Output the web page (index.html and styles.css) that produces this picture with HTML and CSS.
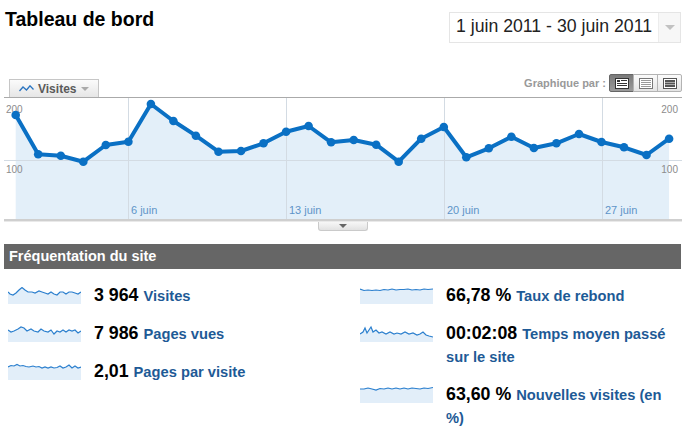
FILE: index.html
```html
<!DOCTYPE html>
<html lang="fr">
<head>
  <meta charset="UTF-8">
  <title>Tableau de bord</title>
  <link rel="stylesheet" href="styles.css">
</head>
<body>

  <div id="header">
    <h1>Tableau de bord</h1>
    <div class="date-range">
      <span class="date-text">1 juin 2011 - 30 juin 2011</span>
      <span class="date-arrow"></span>
    </div>
  </div>

  <div id="toolbar">
    <div class="metric-tab">
      <svg class="tab-icon" width="15" height="7" viewBox="0 0 15 7">
        <polyline points="0.5,6 4,2 7.5,5 11,0.8 14.5,4.5" fill="none" stroke="#2a74c0" stroke-width="1.3"/>
      </svg>
      <span class="tab-label">Visites</span>
      <span class="tab-arrow"></span>
    </div>
    <div class="graph-by">
      <span class="graph-by-label">Graphique par :</span>
      <div class="btn-group">
        <button class="view-btn view-btn-selected">
          <svg width="14" height="11" viewBox="0 0 14 11">
            <rect x="0.5" y="0.5" width="13" height="10" fill="#fff" stroke="#333"/>
            <rect x="2" y="2" width="3" height="2" fill="#333"/>
            <path d="M6 2.5H12M2 5.5H12M2 7.5H12" stroke="#333"/>
          </svg>
        </button>
        <button class="view-btn">
          <svg width="14" height="11" viewBox="0 0 14 11">
            <rect x="0.5" y="0.5" width="13" height="10" fill="#fff" stroke="#777"/>
            <path d="M2 2.5H12M2 4.5H12M2 6.5H12M2 8.5H12" stroke="#999"/>
          </svg>
        </button>
        <button class="view-btn">
          <svg width="14" height="11" viewBox="0 0 14 11">
            <rect x="0.5" y="0.5" width="13" height="10" fill="#fff" stroke="#555"/>
            <rect x="2" y="2" width="10" height="2" fill="#555"/>
            <rect x="2" y="4.5" width="10" height="2" fill="#555"/>
            <rect x="2" y="7" width="10" height="2" fill="#555"/>
          </svg>
        </button>
      </div>
    </div>
  </div>

  <div id="chart">
    <svg width="678" height="125" viewBox="0 0 678 125">
      <defs>
        <marker id="dot" markerUnits="userSpaceOnUse" markerWidth="10" markerHeight="10" refX="5" refY="5">
          <circle cx="5" cy="5" r="4.3" fill="#0a70c4"/>
        </marker>
      </defs>
      <rect x="0" y="0" width="678" height="1" fill="#aaa"/>
      <polygon fill="#e3eff9" points="11.7,18 34.2,57.3 56.8,58.7 79.3,64.7 101.8,48 124.4,44.7 146.9,7 169.4,24 191.9,38.7 214.5,54.7 237,54 259.5,46.3 282.1,34.7 304.6,29 327.1,45.3 349.7,43 372.2,47.7 394.7,64.7 417.2,41.7 439.8,30 462.3,60.3 484.8,51.3 507.4,39.7 529.9,51 552.4,46.3 575,37 597.5,45 620,50.3 642.5,58 665.1,41.7 665.1,122 11.7,122"/>
      <path d="M0 63.5H678M124.5 1V122M282.5 1V122M440.5 1V122M598.5 1V122" stroke="#d3dbe3" fill="none"/>
      <g class="axis-label">
        <text x="2" y="15.6">200</text>
        <text x="2" y="75.6">100</text>
        <text x="674" y="15.6" text-anchor="end">200</text>
        <text x="674" y="75.6" text-anchor="end">100</text>
      </g>
      <g class="date-label">
        <text x="127" y="117">6 juin</text>
        <text x="285" y="117">13 juin</text>
        <text x="443" y="117">20 juin</text>
        <text x="601" y="117">27 juin</text>
      </g>
      <polyline fill="none" stroke="#0a70c4" stroke-width="4" stroke-linejoin="round" marker-start="url(#dot)" marker-mid="url(#dot)" marker-end="url(#dot)" points="11.7,18 34.2,57.3 56.8,58.7 79.3,64.7 101.8,48 124.4,44.7 146.9,7 169.4,24 191.9,38.7 214.5,54.7 237,54 259.5,46.3 282.1,34.7 304.6,29 327.1,45.3 349.7,43 372.2,47.7 394.7,64.7 417.2,41.7 439.8,30 462.3,60.3 484.8,51.3 507.4,39.7 529.9,51 552.4,46.3 575,37 597.5,45 620,50.3 642.5,58 665.1,41.7"/>
      <rect x="0" y="122" width="678" height="2" fill="#cfcfcf"/>
      <rect x="0" y="124" width="678" height="1" fill="#e9e9e9"/>
    </svg>
  </div>
  <div class="chart-handle"></div>

  <div class="section-title">Fréquentation du site</div>

  <div id="metrics">
    <div class="metric-col">
      <div class="metric">
        <svg class="spark" viewBox="0 0 73 17" preserveAspectRatio="none">
          <polygon class="spark-area" points="0,5 2,7 5,8 8,6 11,3 14,0.5 17,3 20,5 24,5 27,6 31,4 34,5 37,6 40,7 43,5 46,7 49,8 52,5 55,5 58,7 61,5 64,5 67,6 70,7 73,5 73,17 0,17"/>
          <polyline class="spark-line" points="0,5 2,7 5,8 8,6 11,3 14,0.5 17,3 20,5 24,5 27,6 31,4 34,5 37,6 40,7 43,5 46,7 49,8 52,5 55,5 58,7 61,5 64,5 67,6 70,7 73,5"/>
        </svg>
        <p><span class="value">3 964</span> <a class="label" href="#">Visites</a></p>
      </div>
      <div class="metric">
        <svg class="spark" viewBox="0 0 73 17" preserveAspectRatio="none">
          <polygon class="spark-area" points="0,5 3,7 6,6 10,4 13,2 16,3 19,6 23,4 26,6 30,7 33,4 36,6 40,7 43,5 46,9 49,6 52,7 55,5 58,7 61,5 64,6 67,5 70,8 73,6 73,17 0,17"/>
          <polyline class="spark-line" points="0,5 3,7 6,6 10,4 13,2 16,3 19,6 23,4 26,6 30,7 33,4 36,6 40,7 43,5 46,9 49,6 52,7 55,5 58,7 61,5 64,6 67,5 70,8 73,6"/>
        </svg>
        <p><span class="value">7 986</span> <a class="label" href="#">Pages vues</a></p>
      </div>
      <div class="metric">
        <svg class="spark" viewBox="0 0 73 17" preserveAspectRatio="none">
          <polygon class="spark-area" points="0,4 3,2.5 6,3 9,1.5 12,3 15,2.5 18,3.5 21,4 25,3 28,4 31,3.5 34,5 37,4 40,5 43,4 46,5 49,4.5 52,3 55,5 58,4 61,2 64,5 67,3 70,5 73,4 73,17 0,17"/>
          <polyline class="spark-line" points="0,4 3,2.5 6,3 9,1.5 12,3 15,2.5 18,3.5 21,4 25,3 28,4 31,3.5 34,5 37,4 40,5 43,4 46,5 49,4.5 52,3 55,5 58,4 61,2 64,5 67,3 70,5 73,4"/>
        </svg>
        <p><span class="value">2,01</span> <a class="label" href="#">Pages par visite</a></p>
      </div>
    </div>

    <div class="metric-col">
      <div class="metric">
        <svg class="spark" viewBox="0 0 73 17" preserveAspectRatio="none">
          <polygon class="spark-area" points="0,2 4,3.5 8,3 12,3.5 16,3 20,3.5 24,2.5 28,3 32,2 36,3 40,2.5 44,2.5 48,2 52,3 56,2.5 60,3 64,2 68,2.5 73,2 73,17 0,17"/>
          <polyline class="spark-line" points="0,2 4,3.5 8,3 12,3.5 16,3 20,3.5 24,2.5 28,3 32,2 36,3 40,2.5 44,2.5 48,2 52,3 56,2.5 60,3 64,2 68,2.5 73,2"/>
        </svg>
        <p><span class="value">66,78 %</span> <a class="label" href="#">Taux de rebond</a></p>
      </div>
      <div class="metric">
        <svg class="spark" viewBox="0 0 73 17" preserveAspectRatio="none">
          <polygon class="spark-area" points="0,9 3,7 5,3 7,8 9,5 11,2 13,7 16,5 19,8 22,7 26,9 30,7 34,9 37,8 41,9 45,7 49,9 53,8 57,10 60,9 63,7 66,10 69,11 73,12 73,17 0,17"/>
          <polyline class="spark-line" points="0,9 3,7 5,3 7,8 9,5 11,2 13,7 16,5 19,8 22,7 26,9 30,7 34,9 37,8 41,9 45,7 49,9 53,8 57,10 60,9 63,7 66,10 69,11 73,12"/>
        </svg>
        <p><span class="value">00:02:08</span> <a class="label" href="#">Temps moyen passé sur le site</a></p>
      </div>
      <div class="metric">
        <svg class="spark" viewBox="0 0 73 17" preserveAspectRatio="none">
          <polygon class="spark-area" points="0,3 4,3 8,2 12,3 16,4 20,2.5 24,3 28,2 32,3 36,2 40,3 44,2 48,3 52,2 56,2.5 60,3 64,2 68,2.5 73,1.5 73,17 0,17"/>
          <polyline class="spark-line" points="0,3 4,3 8,2 12,3 16,4 20,2.5 24,3 28,2 32,3 36,2 40,3 44,2 48,3 52,2 56,2.5 60,3 64,2 68,2.5 73,1.5"/>
        </svg>
        <p><span class="value">63,60 %</span> <a class="label" href="#">Nouvelles visites (en %)</a></p>
      </div>
    </div>
  </div>

</body>
</html>
```

FILE: styles.css
```css
body {
  margin: 0;
  background: #fff;
  font-family: "Liberation Sans", Arial, sans-serif;
  color: #000;
}

#header {
  display: flex;
  justify-content: space-between;
  align-items: flex-start;
  height: 43px;
  padding: 9px 5px 0 5px;
  box-sizing: border-box;
}
h1 {
  margin: 0;
  font-size: 19.5px;
  line-height: 20px;
  font-weight: bold;
}
.date-range {
  display: flex;
  height: 31px;
  margin-top: 3px;
  border: 1px solid #e5e5e5;
  box-sizing: border-box;
}
.date-text {
  padding: 0 6px;
  font-size: 17.7px;
  line-height: 27px;
  color: #222;
}
.date-arrow {
  display: flex;
  align-items: center;
  justify-content: center;
  width: 21px;
  border-left: 1px solid #ececec;
  background: #f7f7f7;
}
.date-arrow::after {
  content: "";
  border-left: 5px solid transparent;
  border-right: 5px solid transparent;
  border-top: 5px solid #c2c2c2;
}

#toolbar {
  display: flex;
  justify-content: space-between;
  height: 23px;
  margin-top: 31px;
  padding: 0 4px 0 9px;
}
.metric-tab {
  align-self: flex-end;
  display: flex;
  align-items: center;
  width: 90px;
  height: 18px;
  padding-left: 9px;
  box-sizing: border-box;
  border: 1px solid #c6c6c6;
  border-bottom: none;
  background: linear-gradient(#fbfbfb, #e6e6e6);
}
.tab-label {
  margin-left: 4px;
  font-size: 12px;
  font-weight: bold;
  color: #5a5a5a;
}
.tab-arrow {
  margin-left: 5px;
  border-left: 4px solid transparent;
  border-right: 4px solid transparent;
  border-top: 4px solid #aaa;
}
.graph-by {
  align-self: flex-start;
  display: flex;
  align-items: center;
  height: 18px;
}
.graph-by-label {
  margin-right: 3px;
  font-size: 11px;
  font-weight: bold;
  color: #999;
}
.btn-group {
  display: flex;
}
.view-btn {
  display: flex;
  align-items: center;
  justify-content: center;
  width: 25px;
  height: 18px;
  padding: 0;
  border: 1px solid #b3b3b3;
  background: linear-gradient(#fbfbfb, #e4e4e4);
}
.view-btn + .view-btn {
  margin-left: -1px;
}
.view-btn:first-child {
  border-radius: 2px 0 0 2px;
}
.view-btn:last-child {
  border-radius: 0 2px 2px 0;
}
.view-btn-selected {
  border-color: #666;
  background: linear-gradient(#7a7a7a, #9a9a9a);
}

#chart {
  margin: 0 4px;
  height: 125px;
}
#chart svg {
  display: block;
}
.axis-label text {
  font-size: 10px;
  fill: #8c8c8c;
}
.date-label text {
  font-size: 11px;
  fill: #5e94c8;
}
.chart-handle {
  display: flex;
  align-items: center;
  justify-content: center;
  width: 50px;
  height: 9px;
  margin: 0 auto;
  box-sizing: border-box;
  border: 1px solid #cacaca;
  border-top: none;
  border-radius: 0 0 3px 3px;
  background: linear-gradient(#f7f7f7, #e2e2e2);
}
.chart-handle::after {
  content: "";
  border-left: 4px solid transparent;
  border-right: 4px solid transparent;
  border-top: 4px solid #666;
}

.section-title {
  height: 25px;
  margin: 13px 5px 0 4px;
  padding-left: 5px;
  background: #666;
  color: #fff;
  font-size: 14.5px;
  font-weight: bold;
  line-height: 25px;
}

#metrics {
  display: grid;
  grid-template-columns: 352px 1fr;
  padding: 15px 11px 0 8px;
}
.metric {
  display: flex;
  align-items: flex-start;
  margin-bottom: 15px;
}
.spark {
  flex: none;
  width: 73px;
  height: 17px;
  margin: 3px 13px 0 0;
}
.spark-area {
  fill: #e2eef9;
}
.spark-line {
  fill: none;
  stroke: #2b7fce;
  stroke-width: 1.2;
}
.metric p {
  margin: 0;
  font-size: 17.8px;
  line-height: 23px;
}
.value {
  font-weight: bold;
  color: #000;
}
.label {
  font-size: 14.7px;
  line-height: 16px;
  font-weight: bold;
  color: #1e5a96;
  text-decoration: none;
}
```
